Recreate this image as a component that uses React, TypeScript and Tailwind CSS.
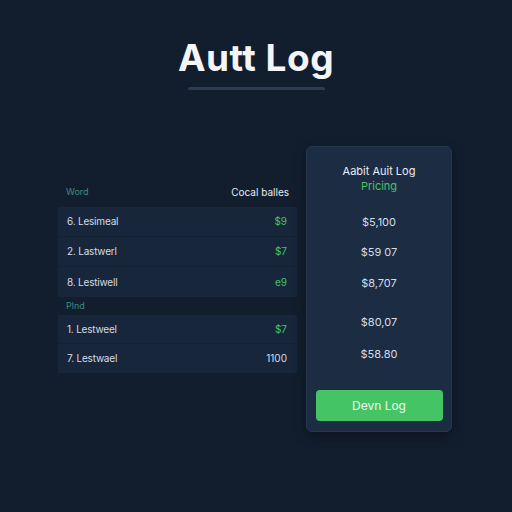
const topRows = [
  { name: "6. Lesimeal", price: "$9", green: true },
  { name: "2. Lastwerl", price: "$7", green: true },
  { name: "8. Lestiwell", price: "e9", green: true },
];

const bottomRows = [
  { name: "1. Lestweel", price: "$7", green: true },
  { name: "7. Lestwael", price: "1100", green: false },
];

function Row({ name, price, green, h }: { name: string; price: string; green: boolean; h: string }) {
  return (
    <div className={`flex ${h} items-center justify-between pl-[9px] pr-[10px] border-b border-[#132133] last:border-b-0`}>
      <span className="text-[10px] tracking-[-0.2px] text-[#d5dce6]">{name}</span>
      <span className={green ? "text-[10px] text-[#45c466]" : "text-[10px] text-[#d5dce6]"}>{price}</span>
    </div>
  );
}

export default function App() {
  return (
    <div
      className="w-[512px] h-[512px] bg-[#121e2e] flex flex-col items-center"
      style={{ fontFamily: "Inter, 'Liberation Sans', sans-serif" }}
    >
      <h1 className="mt-[36px] text-[37px] font-bold leading-[44px] text-[#f3f5f8] tracking-[0.5px]">Autt Log</h1>
      <div className="mt-[7px] w-[137px] h-[3px] rounded-full bg-[#2a3c54]" />

      <div className="mt-[56px] w-full flex items-start pl-[58px]">
        <div className="w-[239px] mt-[39px] flex flex-col">
          <div className="flex justify-between items-center h-[14px] px-[8px] mb-[8px]">
            <span className="text-[9px] text-[#3f8c7e]">Word</span>
            <span className="text-[10px] text-[#e6ebf2]">Cocal balles</span>
          </div>
          <div className="bg-[#17263a] flex flex-col">
            {topRows.map((r) => (
              <Row key={r.name} h="h-[30px]" {...r} />
            ))}
          </div>
          <div className="h-[18px] flex items-center px-[8px]">
            <span className="text-[9px] text-[#3f8c7e]">Plnd</span>
          </div>
          <div className="bg-[#17263a] flex flex-col">
            {bottomRows.map((r) => (
              <Row key={r.name} h="h-[29px]" {...r} />
            ))}
          </div>
        </div>

        <div className="ml-[9px] w-[146px] h-[286px] rounded-[6px] bg-[#1c2c42] border border-[#26384f] flex flex-col items-center shadow-[0_4px_12px_rgba(0,0,0,0.35)]">
          <div className="mt-[17px] text-[11px] text-[#e8edf3] leading-[14px]">Aabit Auit Log</div>
          <div className="text-[11px] text-[#45c466] leading-[16px]">Pricing</div>
          <div className="mt-[20px] flex flex-col items-center text-[11px] leading-[16px] text-[#d5dce6]">
            <div>$5,100</div>
            <div className="mt-[14px]">$59 07</div>
            <div className="mt-[15px]">$8,707</div>
            <div className="mt-[23px]">$80,07</div>
            <div className="mt-[16px]">$58.80</div>
          </div>
          <button className="mt-[28px] w-[127px] h-[31px] rounded-[4px] bg-[#45c466] text-[12px] text-[#eafaf0]">
            Devn Log
          </button>
        </div>
      </div>
    </div>
  );
}
